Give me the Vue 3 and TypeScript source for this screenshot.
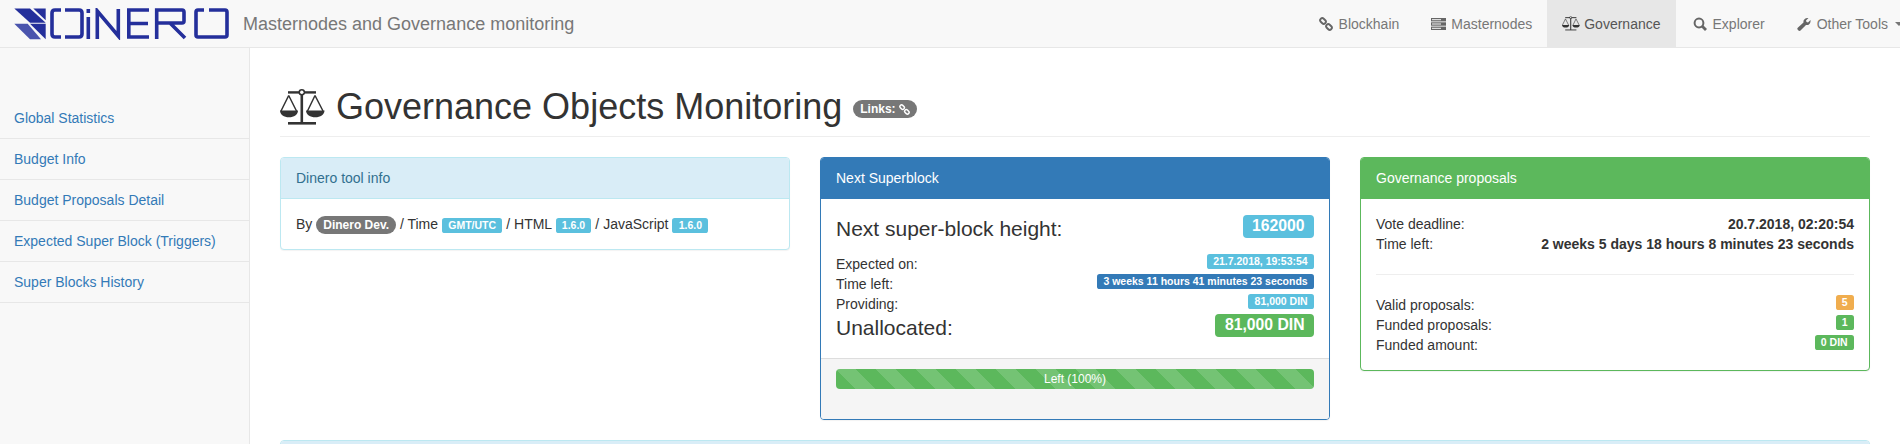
<script setup lang="ts">
const sideLinks: string[] = ['Global Statistics', 'Budget Info', 'Budget Proposals Detail', 'Expected Super Block (Triggers)', 'Super Blocks History']
</script>

<template>
  <div class="page">
    <nav class="navbar">
      <div class="brand">
        <svg class="logo" width="215" height="32" viewBox="0 0 215 32">
          <g fill="#242f9b">
            <polygon points="0.3,0.5 16,0.5 31.7,14.7 16,14.7" />
            <polygon points="19.300,0.500 31.700,0.500 31.700,12.300" />
            <polygon points="16,15.700 31.700,15.700 31.700,31.300" />
            <polygon points="0.300,15.700 13.700,15.700 27,31.300 16,31.300" fill="#4a54ad" />
          </g>
          <g fill="none" stroke="#242f9b" stroke-width="3.600">
            <path d="M47 2h-6q-3 0-3 3v21q0 3 3 3h6" />
            <path d="M51 2h14q3 0 3 3v21q0 3-3 3h-14" />
            <path d="M74.300 9v22M74.300 1v4" />
            <path d="M83.300 31V3l21 25V1" />
            <path d="M135 2H114.800v27H135M114.800 15.500H134" />
            <path d="M142.700 31V2H168q2 0 2 2v9q0 2-2 2H144M156 15l15 15" />
            <path d="M190 2h-6q-2 0-2 2v23q0 2 2 2h27q2 0 2-2V4q0-2-2-2h-16" />
          </g>
        </svg>
        <span class="brand-text">Masternodes and Governance monitoring</span>
      </div>
      <ul class="menu">
        <li><span class="fw"><svg width="14" height="14" viewBox="0 0 14 14"><g fill="none" stroke="#666" stroke-width="1.900"><rect x="-3.100" y="-2.100" width="6.200" height="4.200" rx="2" transform="translate(4 4) rotate(45)"/><rect x="-3.100" y="-2.100" width="6.200" height="4.200" rx="2" transform="translate(10 10) rotate(45)"/></g></svg></span>Blockhain</li>
        <li><span class="fw"><svg width="15" height="14" viewBox="0 0 15 14"><g fill="#666"><rect y="1" width="15" height="3.400"/><rect y="5.300" width="15" height="3.400"/><rect y="9.600" width="15" height="3.400"/></g><g fill="#f8f8f8"><rect x="1" y="2.200" width="9" height="1"/><rect x="1" y="6.500" width="9" height="1"/><rect x="1" y="10.800" width="9" height="1"/></g></svg></span>Masternodes</li>
        <li class="active"><span class="fw"><svg width="18" height="15" viewBox="0 0 45 36"><use href="#scale" /></svg></span>Governance</li>
        <li><span class="fw"><svg width="14" height="14" viewBox="0 0 14 14"><g fill="none" stroke="#666"><circle cx="6" cy="6" r="4.400" stroke-width="2"/><path d="M9 9l4 4" stroke-width="2.800"/></g></svg></span>Explorer</li>
        <li><span class="fw"><svg width="14" height="14" viewBox="0 0 14 14"><path fill="#666" d="M1 13c-1-1-1-1.600 0-2.500L6.500 5.500C6 3 8 .5 11.500 1L9 3.500 9.500 5l1.500.5L13.500 3c.5 3.500-2 5.500-4.500 5L3.500 13.500c-.9.700-1.600.5-2.500-.5z"/></svg></span>Other Tools<span class="caret"></span></li>
      </ul>
    </nav>
    <div class="layout">
      <aside class="sidebar">
        <a v-for="l in sideLinks" :key="l" class="side-link">{{ l }}</a>
      </aside>
      <main class="main">
        <h1 class="title">
          <svg class="title-icon" width="45" height="36" viewBox="0 0 45 36">
            <defs>
              <symbol id="scale" viewBox="0 0 45 36">
                <g fill="none" stroke="#333" stroke-width="1.500">
                  <path d="M8.700 6.500 1 22M8.700 6.500 16.500 22M35 6.500 27.500 22M35 6.500 43 22" />
                </g>
                <g fill="#333">
                  <rect x="8" y="2.200" width="28" height="2.400" />
                  <rect x="20.500" y="5" width="2.600" height="29" />
                  <rect x="8" y="33" width="28" height="2.600" />
                  <circle cx="21.800" cy="3.300" r="3.300" />
                  <path d="M0 21.500h18c0 4-4 6.800-9 6.800s-9-2.800-9-6.800zM26 21.500h18.500c0 4-4.200 6.800-9.200 6.800s-9.300-2.800-9.300-6.800z" />
                </g>
                <circle cx="21.800" cy="3.300" r="1.700" fill="#fff" />
              </symbol>
            </defs>
            <use href="#scale" />
          </svg>
          <span class="title-text">Governance Objects Monitoring</span>
          <span class="badge links">Links: <svg class="ic-link" viewBox="0 0 14 14"><g fill="none" stroke="#fff" stroke-width="1.900"><rect x="-3.100" y="-2.100" width="6.200" height="4.200" rx="2" transform="translate(4 4) rotate(45)"/><rect x="-3.100" y="-2.100" width="6.200" height="4.200" rx="2" transform="translate(10 10) rotate(45)"/></g></svg></span>
        </h1>
        <div class="cols">
          <section class="panel info">
            <header class="head">Dinero tool info</header>
            <div class="body">By <span class="badge">Dinero Dev.</span> / Time <span class="label l-info">GMT/UTC</span> / HTML <span class="label l-info">1.6.0</span> / JavaScript <span class="label l-info">1.6.0</span></div>
          </section>
          <section class="panel primary">
            <header class="head">Next Superblock</header>
            <div class="body">
              <div class="row big first"><span class="big-text">Next super-block height:</span><span class="label l-info">162000</span></div>
              <div class="row"><span>Expected on:</span><span class="label l-info">21.7.2018, 19:53:54</span></div>
              <div class="row"><span>Time left:</span><span class="label l-blue">3 weeks 11 hours 41 minutes 23 seconds</span></div>
              <div class="row"><span>Providing:</span><span class="label l-info">81,000 DIN</span></div>
              <div class="row big last"><span class="big-text">Unallocated:</span><span class="label l-green">81,000 DIN</span></div>
            </div>
            <footer class="foot">
              <div class="progress"><div class="bar">Left (100%)</div></div>
            </footer>
          </section>
          <section class="panel success">
            <header class="head">Governance proposals</header>
            <div class="body">
              <div class="row"><span>Vote deadline:</span><b>20.7.2018, 02:20:54</b></div>
              <div class="row"><span>Time left:</span><b>2 weeks 5 days 18 hours 8 minutes 23 seconds</b></div>
              <hr class="rule" />
              <div class="row"><span>Valid proposals:</span><span class="label l-orange">5</span></div>
              <div class="row"><span>Funded proposals:</span><span class="label l-green">1</span></div>
              <div class="row"><span>Funded amount:</span><span class="label l-green">0 DIN</span></div>
            </div>
          </section>
        </div>
        <section class="panel info wide"><header class="head">&nbsp;</header></section>
      </main>
    </div>
  </div>
</template>

<style>
html, body { margin: 0; height: 444px; overflow: hidden; background: #fff; }
</style>

<style scoped>
.page { font: 14px/20px "Liberation Sans", Arial, sans-serif; color: #333; height: 444px; overflow: hidden; }
.navbar { display: flex; justify-content: space-between; height: 47px; background: #f8f8f8; border-bottom: 1px solid #e7e7e7; }
.brand { display: flex; align-items: center; }
.logo { margin-left: 14px; margin-right: 14px; }
.brand-text { font-size: 18px; color: #777; white-space: nowrap; }
.menu { display: flex; list-style: none; margin: 0 -18px 0 0; padding: 0; }
.menu li { display: flex; align-items: center; padding: 0 15px; color: #777; }
.menu li.active { background: #e7e7e7; color: #555; }
.fw { width: 18px; margin-right: 4px; display: flex; justify-content: center; align-items: center; }
.caret { display: inline-block; margin-left: 7px; border-top: 4px solid #777; border-left: 4px solid transparent; border-right: 4px solid transparent; }
.layout { display: flex; }
.sidebar { width: 249px; height: 346px; background: #f8f8f8; border-right: 1px solid #e7e7e7; padding-top: 50px; flex: none; }
.side-link { display: block; height: 40px; padding: 10px 15px 10px 14px; box-sizing: border-box; margin-bottom: 1px; color: #337ab7; box-shadow: 0 1px 0 #e7e7e7; }
.main { flex: 1; padding: 0 30px; min-width: 0; }
.title { display: flex; align-items: center; height: 39.600px; font-size: 36px; font-weight: 500; line-height: 39.600px; margin: 39px 0 20px; padding-bottom: 9px; border-bottom: 1px solid #eee; box-sizing: content-box; }
.title-icon { flex: none; margin-right: 11px; }
.badge { display: inline-block; min-width: 10px; padding: 3px 7px; font-size: 12px; font-weight: 700; line-height: 1; color: #fff; background: #777; border-radius: 10px; vertical-align: middle; }
.links { margin-left: 11px; margin-top: 4px; white-space: nowrap; }
.ic-link { width: 11px; height: 11px; vertical-align: -2px; }
.cols { display: grid; grid-template-columns: repeat(3, 1fr); gap: 30px; align-items: start; }
.panel { border: 1px solid transparent; border-radius: 4px; margin-bottom: 20px; background: #fff; box-shadow: 0 1px 1px rgba(0,0,0,.05); overflow: hidden; }
.head { padding: 10px 15px; border-bottom: 1px solid transparent; }
.body { padding: 15px; }
.foot { padding: 10px 15px; background: #f5f5f5; border-top: 1px solid #ddd; }
.info { border-color: #bce8f1; }
.info .head { background: #d9edf7; color: #31708f; border-bottom-color: #bce8f1; }
.primary { border-color: #337ab7; }
.primary .head { background: #337ab7; color: #fff; border-bottom-color: #337ab7; }
.success { border-color: #5cb85c; }
.success .head { background: #5cb85c; color: #fff; border-bottom-color: #5cb85c; }
.row { display: flex; justify-content: space-between; align-items: flex-start; height: 20px; }
.big { font-size: 21px; height: 24px; line-height: 24px; }
.big-text { padding-top: 3px; }
.first { margin-bottom: 10px; height: 30px; }
.first .label { margin-top: 1px; }
.last { height: 29px; }
.last .big-text { padding-top: 2px; }
.label { display: inline-block; padding: .2em .6em .3em; font-size: 75%; font-weight: 700; line-height: 1; color: #fff; border-radius: .25em; white-space: nowrap; }
.l-info { background: #5bc0de; }
.l-blue { background: #337ab7; }
.l-green { background: #5cb85c; }
.l-orange { background: #f0ad4e; }
.rule { border: 0; border-top: 1px solid #eee; margin: 20px 0; }
.progress { height: 20px; margin-bottom: 20px; border-radius: 4px; overflow: hidden; background: #f5f5f5; }
.bar { height: 20px; font-size: 12px; line-height: 20px; text-align: center; color: #fff; background-color: #5cb85c; background-image: linear-gradient(45deg, rgba(255,255,255,.15) 25%, transparent 25%, transparent 50%, rgba(255,255,255,.15) 50%, rgba(255,255,255,.15) 75%, transparent 75%, transparent); background-size: 40px 40px; }
</style>
